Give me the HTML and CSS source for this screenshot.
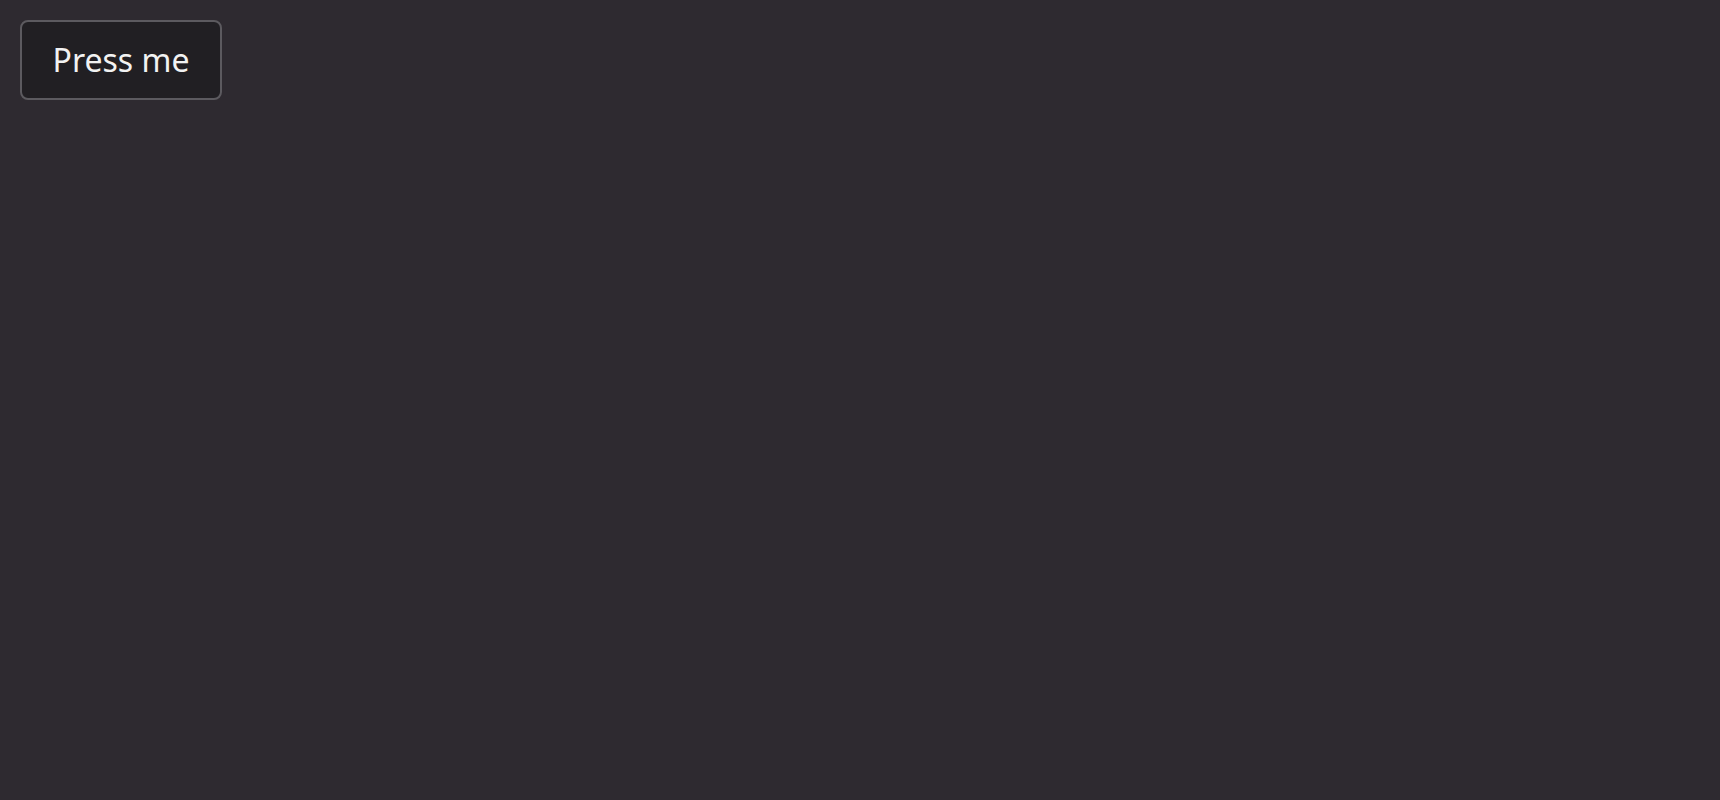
FILE: index.html
```html
<!DOCTYPE html>
<html>
<head>
<meta charset="utf-8">
<link rel="stylesheet" href="styles.css">
</head>
<body>
<div class="page">
  <button class="btn">Press me</button>
</div>
</body>
</html>
```
FILE: styles.css
```css
html, body {
  margin: 0;
  height: 100%;
  background: #2e2a30;
}
.page {
  padding: 20px;
  display: flex;
  align-items: flex-start;
}
.btn {
  box-sizing: border-box;
  width: 202px;
  height: 80px;
  border: 2px solid #5c5a5f;
  border-radius: 8px;
  background: #211f23;
  color: #f2f2f2;
  font-family: "Noto Sans", "Open Sans", sans-serif;
  font-size: 32px;
  line-height: 1;
  padding: 0;
  display: flex;
  align-items: center;
  justify-content: center;
}
```
